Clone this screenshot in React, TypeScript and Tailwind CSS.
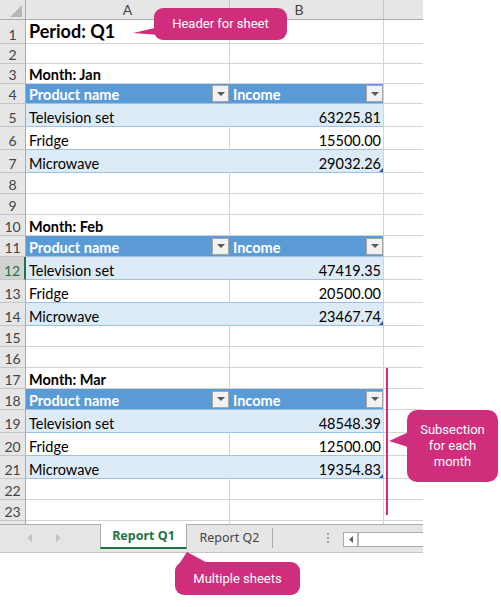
import React from 'react';

type RowType = 'title' | 'month' | 'head' | 'band' | 'plain' | 'empty';
interface Row {
  n: number;
  h: number;
  t: RowType;
  a?: string;
  b?: string;
  last?: boolean;
}

const rows: Row[] = [
  { n: 1, h: 24, t: 'title', a: 'Period: Q1' },
  { n: 2, h: 20, t: 'empty' },
  { n: 3, h: 20, t: 'month', a: 'Month: Jan' },
  { n: 4, h: 20, t: 'head' },
  { n: 5, h: 23, t: 'band', a: 'Television set', b: '63225.81' },
  { n: 6, h: 23, t: 'plain', a: 'Fridge', b: '15500.00' },
  { n: 7, h: 23, t: 'band', a: 'Microwave', b: '29032.26', last: true },
  { n: 8, h: 21, t: 'empty' },
  { n: 9, h: 21, t: 'empty' },
  { n: 10, h: 21, t: 'month', a: 'Month: Feb' },
  { n: 11, h: 21, t: 'head' },
  { n: 12, h: 23, t: 'band', a: 'Television set', b: '47419.35' },
  { n: 13, h: 23, t: 'plain', a: 'Fridge', b: '20500.00' },
  { n: 14, h: 23, t: 'band', a: 'Microwave', b: '23467.74', last: true },
  { n: 15, h: 21, t: 'empty' },
  { n: 16, h: 21, t: 'empty' },
  { n: 17, h: 21, t: 'month', a: 'Month: Mar' },
  { n: 18, h: 21, t: 'head' },
  { n: 19, h: 23, t: 'band', a: 'Television set', b: '48548.39' },
  { n: 20, h: 23, t: 'plain', a: 'Fridge', b: '12500.00' },
  { n: 21, h: 23, t: 'band', a: 'Microwave', b: '19354.83', last: true },
  { n: 22, h: 21, t: 'empty' },
  { n: 23, h: 21, t: 'empty' },
];

const H: Record<number, string> = {
  20: 'h-[20px]',
  21: 'h-[21px]',
  23: 'h-[23px]',
  24: 'h-[24px]',
};

function DropBtn() {
  return (
    <div className="w-[17px] h-[17px] self-center shrink-0 border border-[#a6a6a6] bg-[#f2f2f2] flex items-center justify-center">
      <svg width="8" height="4" viewBox="0 0 8 4">
        <path d="M0 0H8L4 4Z" fill="#5a5a5a" />
      </svg>
    </div>
  );
}

function ColHeader() {
  return (
    <div className="flex h-[20px] bg-[#e6e6e6] border-b border-b-[#ababab] text-[14px] text-[#444]">
      <div className="w-[26px] shrink-0 border-r border-r-[#ababab] flex items-end justify-end pr-[3px] pb-[2px]">
        <svg width="12" height="12" viewBox="0 0 12 12">
          <path d="M12 0V12H0Z" fill="#b7b7b7" />
        </svg>
      </div>
      <div className="w-[204px] shrink-0 border-r border-r-[#c6c6c6] flex items-center justify-center">A</div>
      <div className="w-[154px] shrink-0 border-r border-r-[#c6c6c6] flex items-center justify-center pr-[15px]">B</div>
      <div className="w-[39px] shrink-0" />
    </div>
  );
}

function Handle() {
  return (
    <svg className="absolute right-0 bottom-0" width="4" height="4" viewBox="0 0 4 4">
      <path d="M4 0V4H0Z" fill="#2f56a6" />
    </svg>
  );
}

function SheetRow({ r }: { r: Row }) {
  const sel = r.n === 12;
  const rowHead = sel
    ? 'bg-[#d2d2d2] text-[#217346] border-r-2 border-r-[#217346]'
    : 'bg-[#e6e6e6] text-[#444] border-r border-r-[#ababab]';

  let aCls = 'border-r-[#d4d4d4] border-b-[#d4d4d4]';
  let bCls = 'border-r-[#d4d4d4] border-b-[#d4d4d4]';
  let aContent: React.ReactNode = null;
  let bContent: React.ReactNode = null;

  if (r.t === 'title') {
    aContent = <span className="text-[18px] font-bold leading-[22px] text-black">{r.a}</span>;
  } else if (r.t === 'month') {
    aContent = <span className="text-[14.5px] font-bold leading-[17px] text-black">{r.a}</span>;
  } else if (r.t === 'head') {
    aCls = 'bg-[#5b9bd5] border-r-[#5b9bd5] border-b-[#9bc2e6]';
    bCls = 'bg-[#5b9bd5] border-r-[#d4d4d4] border-b-[#9bc2e6]';
    aContent = (
      <>
        <span className="flex-1 text-[14.5px] font-bold leading-[17px] text-white">Product name</span>
        <DropBtn />
      </>
    );
    bContent = (
      <>
        <span className="flex-1 text-[14.5px] font-bold leading-[17px] text-white">Income</span>
        <DropBtn />
      </>
    );
  } else if (r.t === 'band') {
    aCls = 'bg-[#ddebf7] border-r-[#ddebf7] border-b-[#9bc2e6]';
    bCls = 'bg-[#ddebf7] border-r-[#d4d4d4] border-b-[#9bc2e6]';
  } else if (r.t === 'plain') {
    aCls = 'bg-white border-r-[#d4d4d4] border-b-[#9bc2e6]';
    bCls = 'bg-white border-r-[#d4d4d4] border-b-[#9bc2e6]';
  }

  if (r.t === 'band' || r.t === 'plain') {
    aContent = <span className="text-[14.5px] leading-[17px] text-black">{r.a}</span>;
    bContent = <span className="flex-1 text-right pr-[2px] text-[14.5px] leading-[17px] text-black">{r.b}</span>;
  }

  const pad = r.t === 'title' ? 'pb-[1px]' : 'pb-0';

  return (
    <div className={`flex ${H[r.h]}`}>
      <div
        className={`w-[26px] shrink-0 border-b border-b-[#c6c6c6] flex items-end justify-center text-[14px] leading-[16px] ${rowHead}`}
      >
        {r.n}
      </div>
      <div className={`w-[204px] shrink-0 border-b border-r flex items-end pl-[3px] whitespace-nowrap overflow-visible ${pad} ${aCls}`}>
        {aContent}
      </div>
      <div className={`relative w-[154px] shrink-0 border-b border-r flex items-end pl-[3px] whitespace-nowrap ${pad} ${bCls}`}>
        {bContent}
        {r.last ? <Handle /> : null}
      </div>
      <div className="w-[39px] shrink-0 border-b border-b-[#d4d4d4]" />
    </div>
  );
}

function PartialRow() {
  return (
    <div className="flex h-[3px]">
      <div className="w-[26px] shrink-0 bg-[#e6e6e6] border-r border-r-[#ababab]" />
      <div className="w-[204px] shrink-0 border-r border-r-[#d4d4d4]" />
      <div className="w-[154px] shrink-0 border-r border-r-[#d4d4d4]" />
      <div className="w-[39px] shrink-0" />
    </div>
  );
}

function TabBar() {
  return (
    <div className="flex items-start h-[29px] bg-[#e6e6e6] border-b border-b-[#c6c6c6] font-['Noto_Sans','Open_Sans',sans-serif] text-[12.5px]">
      <div className="w-[100px] h-[28px] shrink-0 border-t border-t-[#ababab] flex items-center pl-[27px] pb-[2px]">
        <svg width="5" height="8" viewBox="0 0 5 8">
          <path d="M5 0V8L0 4Z" fill="#c2c2c2" />
        </svg>
        <svg className="ml-[24px]" width="5" height="8" viewBox="0 0 5 8">
          <path d="M0 0V8L5 4Z" fill="#c2c2c2" />
        </svg>
      </div>
      <div className="w-[87px] h-[25px] shrink-0 bg-white border-l border-r border-l-[#ababab] border-r-[#ababab] border-b-2 border-b-[#217346] flex items-center justify-center pt-[1px] font-bold text-[#217346]">
        Report Q1
      </div>
      <div className="flex-1 h-[28px] border-t border-t-[#ababab] flex items-start">
        <div className="w-[85px] h-[27px] shrink-0 flex items-center justify-center text-[#444]">Report Q2</div>
        <div className="w-[1px] h-[20px] mt-[3px] shrink-0 bg-[#ababab]" />
        <svg className="ml-[54px] mt-[8px] shrink-0" width="2" height="10" viewBox="0 0 2 10">
          <rect x="0" y="0" width="2" height="2" fill="#a6a6a6" />
          <rect x="0" y="4" width="2" height="2" fill="#a6a6a6" />
          <rect x="0" y="8" width="2" height="2" fill="#a6a6a6" />
        </svg>
        <div className="ml-[14px] mt-[7px] flex-1 h-[15px] border border-r-0 border-[#ababab] bg-white flex">
          <div className="w-[13px] h-full flex items-center justify-center">
            <svg width="4" height="7" viewBox="0 0 4 7">
              <path d="M4 0V7L0 3.5Z" fill="#606060" />
            </svg>
          </div>
          <div className="w-[2px] h-full bg-[#b4b4b4]" />
        </div>
      </div>
    </div>
  );
}

function Callouts() {
  const pink = '#d02e7c';
  return (
    <div className="font-['Roboto','Liberation_Sans',sans-serif] text-white text-[13px]">
      <svg className="absolute left-[132px] top-[25px]" width="28" height="12" viewBox="0 0 28 12">
        <path d="M1 8L27 2V10Z" fill={pink} />
      </svg>
      <div className="absolute left-[154px] top-[8px] w-[133px] h-[32px] rounded-[9px] bg-[#d02e7c] flex items-center justify-center">
        Header for sheet
      </div>

      <div className="absolute left-[386px] top-[368px] w-[2px] h-[147px] bg-[#d02e7c]" />

      <svg className="absolute left-[388px] top-[429px]" width="24" height="21" viewBox="0 0 24 21">
        <path d="M1 12L23 2V19Z" fill={pink} />
      </svg>
      <div className="absolute left-[407px] top-[410px] w-[91px] h-[72px] rounded-[10px] bg-[#d02e7c] flex flex-col items-center justify-center leading-[16px]">
        <span>Subsection</span>
        <span>for each</span>
        <span>month</span>
      </div>

      <svg className="absolute left-[175px] top-[550px]" width="42" height="18" viewBox="0 0 42 18">
        <path d="M12 2L2 17L40 17Z" fill={pink} />
      </svg>
      <div className="absolute left-[175px] top-[562px] w-[125px] h-[33px] rounded-[9px] bg-[#d02e7c] flex items-center justify-center">
        Multiple sheets
      </div>
    </div>
  );
}

export default function App() {
  return (
    <div className="relative w-[501px] h-[607px] bg-white overflow-hidden font-['Lato','Liberation_Sans',sans-serif]">
      <div className="w-[423px] flex flex-col">
        <ColHeader />
        {rows.map((r) => (
          <SheetRow key={r.n} r={r} />
        ))}
        <PartialRow />
        <TabBar />
      </div>
      <Callouts />
    </div>
  );
}
